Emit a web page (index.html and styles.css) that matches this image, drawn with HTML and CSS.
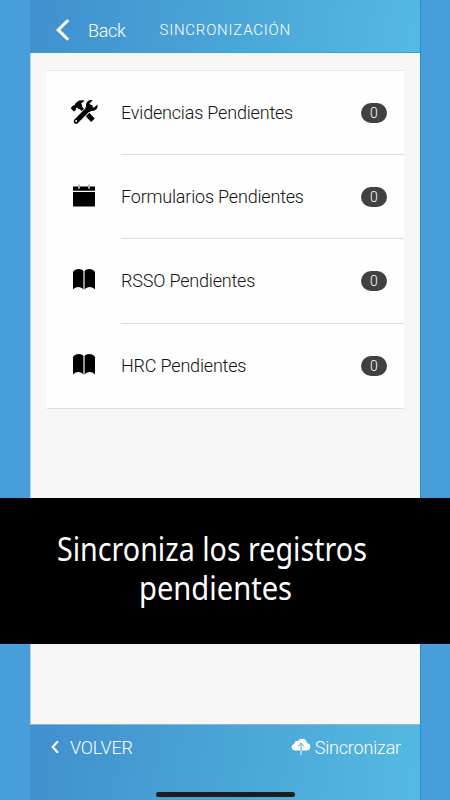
FILE: index.html
```html
<!DOCTYPE html>
<html lang="es">
<head>
<meta charset="utf-8">
<title>Sincronización</title>
<link rel="stylesheet" href="styles.css">
</head>
<body>
<div class="phone">
  <header class="header">
    <svg class="back-icon" viewBox="0 0 14 22"><path d="M12.2 1.2 2.2 10.9l10 9.9" fill="none" stroke="currentColor" stroke-width="3"/></svg>
    <span class="back">Back</span>
    <h1 class="title">SINCRONIZACIÓN</h1>
  </header>
  <main class="content">
    <ul class="card">
      <li class="row">
        <svg class="icon" viewBox="0 0 28 26">
          <path d="M15.5 13.5 23 21.2" stroke="#000" stroke-width="5"/>
          <path d="M8 6 17 15" stroke="#000" stroke-width="3.2"/>
          <path d="M.7 9.2 3.2 6.3 4.4 6.5C6 2.2 10 .2 14.6 1.7L11.2 4.5 12.5 7.2 8.7 10.6 7.2 8.6 5.8 9.5 5.9 11.1 3.9 12.5Z"/>
          <path d="M6.2 22.2 20.3 8.1" stroke="#fff" stroke-width="6.6"/>
          <path d="M6.2 22.2 20.3 8.1" stroke="#000" stroke-width="5" stroke-linecap="round"/>
          <path d="M22.7 1.2C18.4.3 15.3 3.5 16.2 7.5L15 9 19.2 13.2 21 11.9C25.5 12.5 28.4 9.4 27.4 5.6L24.1 8.4 20.4 7.7 19.6 4.3Z"/>
          <circle cx="6.1" cy="22" r="1" fill="#fff"/>
        </svg>
        <div class="item"><span class="label">Evidencias Pendientes</span><span class="badge">0</span></div>
      </li>
      <li class="row">
        <svg class="icon" viewBox="0 0 28 26">
          <path d="M3 3.4H25V7.8H3ZM3 8.9H25V23.5H3Z"/>
          <path d="M9 1.4V5.8M19 1.4V5.8" stroke="#bbb" stroke-width="1.8"/>
        </svg>
        <div class="item"><span class="label">Formularios Pendientes</span><span class="badge">0</span></div>
      </li>
      <li class="row">
        <svg class="icon" viewBox="0 0 28 26">
          <path d="M3 5C5 1.2 11.5 1.2 13.5 4V22.6C11 19 5.5 19 3 22.6ZM14.5 4C16.5 1.2 23 1.2 25 5V22.6C22.5 19 17 19 14.5 22.6Z"/>
          <path d="M14 4V22.8" stroke="#aaa" stroke-width="1"/>
        </svg>
        <div class="item"><span class="label">RSSO Pendientes</span><span class="badge">0</span></div>
      </li>
      <li class="row">
        <svg class="icon" viewBox="0 0 28 26">
          <path d="M3 5C5 1.2 11.5 1.2 13.5 4V22.6C11 19 5.5 19 3 22.6ZM14.5 4C16.5 1.2 23 1.2 25 5V22.6C22.5 19 17 19 14.5 22.6Z"/>
          <path d="M14 4V22.8" stroke="#aaa" stroke-width="1"/>
        </svg>
        <div class="item"><span class="label">HRC Pendientes</span><span class="badge">0</span></div>
      </li>
    </ul>
  </main>
  <footer class="footer">
    <div class="action">
      <svg class="volver-icon" viewBox="0 0 8 14"><path d="M7 1.2 1.6 7 7 12.8" fill="none" stroke="currentColor" stroke-width="2.1"/></svg>
      <span class="volver">VOLVER</span>
    </div>
    <div class="action">
      <svg class="cloud" viewBox="0 0 20 18">
        <path fill="#fff" d="M4.500 12.500C1.900 12.500.6 11 .6 9.200.6 7.400 1.800 6.200 3.400 5.900 3.200 3.800 5.200 2.500 7 3.300 8.200 1.300 9.700.8 11.100.8 14 .8 15.600 2.800 15.800 5 18 5.300 19.400 6.700 19.400 8.700 19.400 11 17.700 12.500 15.400 12.500Z"/>
        <path d="M10 13V5.200M6.700 8.400 10 5.200l3.300 3.200" fill="none" stroke="#4cabd9" stroke-width="1"/>
        <path d="M10 12.500V17" stroke="#fff" stroke-width="1"/>
      </svg>
      <span class="sync">Sincronizar</span>
    </div>
  </footer>
</div>
<div class="home-bar"></div>
<div class="banner">
  <p class="line first">Sincroniza los registros</p>
  <p class="line second">pendientes</p>
</div>
</body>
</html>
```

FILE: styles.css
```css
* { box-sizing: border-box; margin: 0; padding: 0; }
body {
  width: 450px;
  height: 800px;
  overflow: hidden;
  position: relative;
  background: #489ddb;
  font-family: Roboto, "Liberation Sans", sans-serif;
  font-weight: 300;
}
.phone {
  width: 390px;
  height: 800px;
  margin-left: 30px;
  display: flex;
  flex-direction: column;
  background: #f7f7f7;
  box-shadow: 1px 0 0 #1b92d6, inset 1px 0 0 #b9d6f0;
}
.header {
  height: 53px;
  display: flex;
  align-items: center;
  padding: 7px 0 0 26px;
  color: #fff;
  background: linear-gradient(100deg, #408fce, #54bae0);
  border-bottom: 1px solid #2fa0d8;
}
.back-icon { width: 14px; height: 22px; margin-right: 18px; }
.back { width: 71.5px; padding-top: 1px; font-size: 18px; letter-spacing: -.3px; }
.title { font-size: 15px; font-weight: 300; letter-spacing: .77px; }
.content { flex: 1; padding: 17px 17px 0 17px; }
.card {
  width: 357px;
  height: 339px;
  list-style: none;
  background: #fefefe;
  border-top: 1px solid #e9e9e9;
  border-bottom: 1px solid #dedede;
}
.row { height: 84.4px; display: flex; align-items: stretch; }
.row:first-child { height: 84px; }
.icon { width: 28px; height: 26px; margin: 28px 23px 0; flex: none; }
.item {
  flex: 1;
  display: flex;
  align-items: center;
  justify-content: space-between;
  padding-right: 17px;
  border-bottom: 1px solid #dedede;
}
.row:last-child .item { border-bottom: 0; }
.label { padding-bottom: 1px; font-size: 18px; letter-spacing: -.19px; color: #111; white-space: nowrap; }
.badge {
  width: 26px;
  height: 20px;
  line-height: 20px;
  border-radius: 10px;
  text-align: center;
  font-size: 14px;
  color: #fff;
  background: #414141;
}
.footer {
  height: 76px;
  display: flex;
  justify-content: space-between;
  align-items: flex-start;
  padding: 11px 19px 0 21px;
  color: #fff;
  background: linear-gradient(100deg, #408fce, #54bae0);
  border-top: 1px solid #91b7cf;
}
.action { display: flex; align-items: center; height: 22px; font-size: 18px; letter-spacing: -.18px; }
.volver-icon { width: 8px; height: 14px; margin-right: 11px; }
.cloud { width: 20px; height: 18px; margin-right: 4px; }
.home-bar {
  position: absolute;
  left: 156px;
  top: 792px;
  width: 139px;
  height: 5px;
  border-radius: 3px;
  background: #1b1d1f;
}
.banner {
  position: absolute;
  left: 0;
  top: 498px;
  width: 450px;
  height: 146px;
  padding-top: 31px;
  background: #000;
  color: #fff;
  font-family: "Noto Sans", "Open Sans", sans-serif;
  font-weight: 400;
}
.line { font-size: 32px; line-height: 39px; white-space: nowrap; transform-origin: 0 50%; width: max-content; }
.first { margin-left: 57px; transform: scaleX(.895); }
.second { margin-left: 139px; transform: scaleX(.91); }
```
